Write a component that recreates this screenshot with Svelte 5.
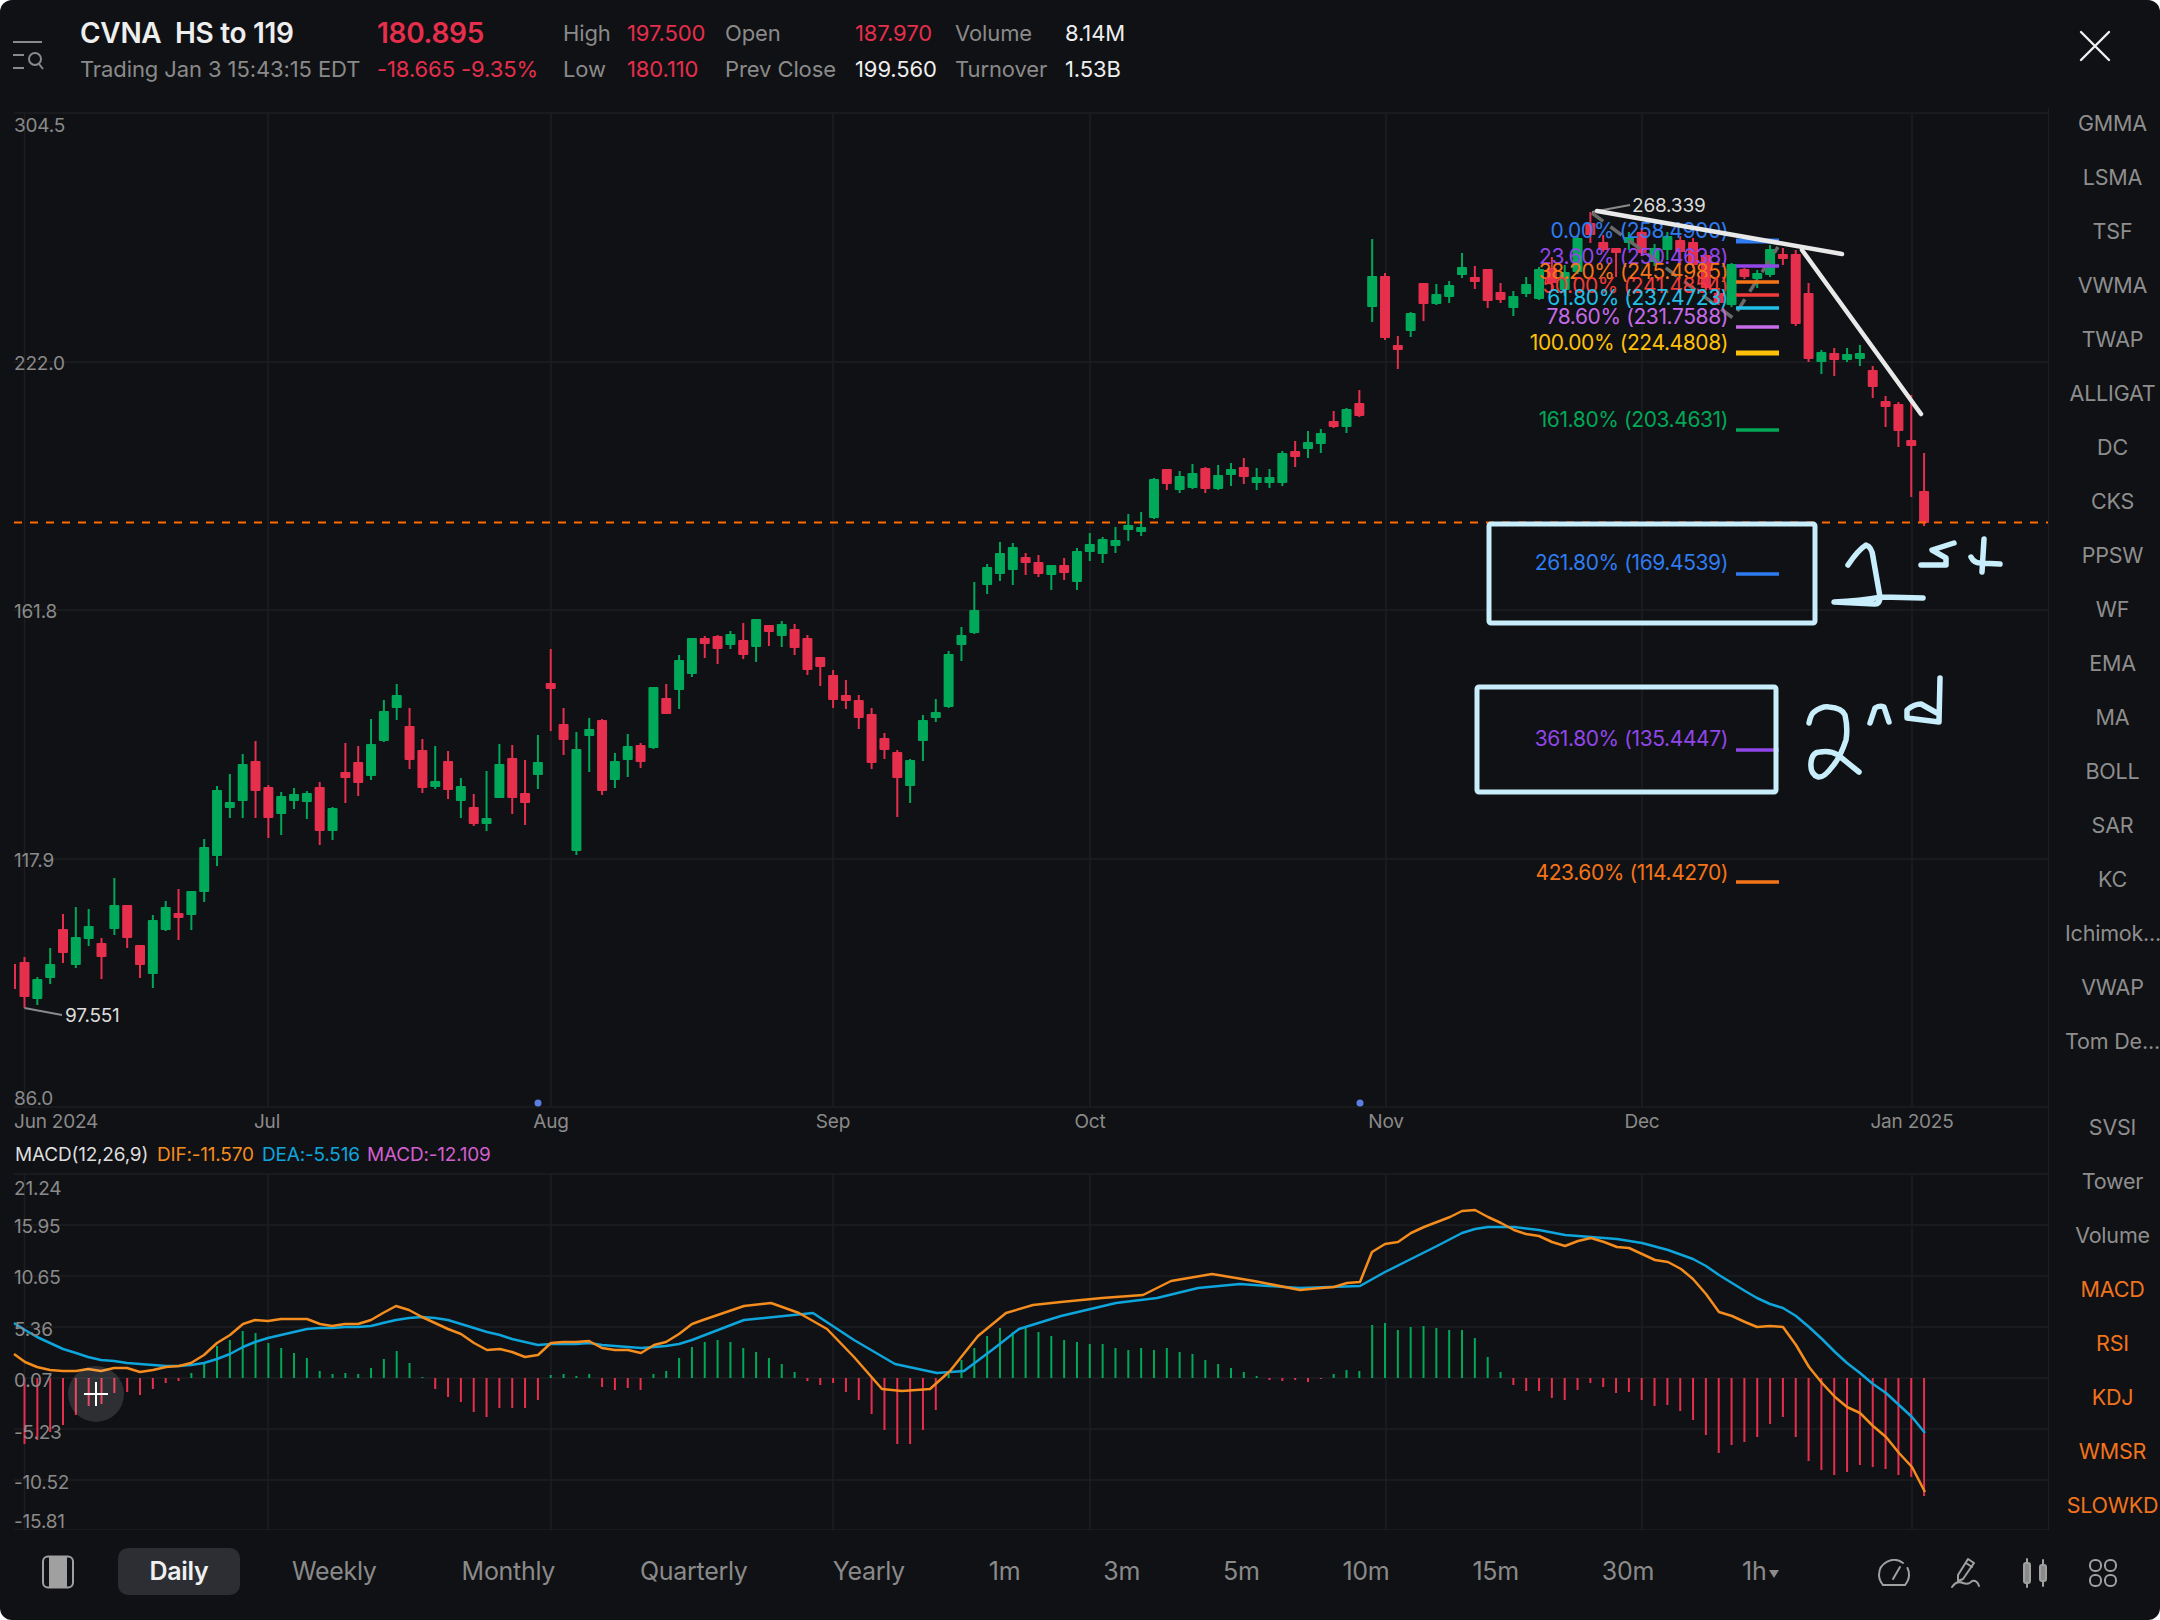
<script>
  const sideTop = ["GMMA", "LSMA", "TSF", "VWMA", "TWAP", "ALLIGAT", "DC", "CKS", "PPSW", "WF", "EMA", "MA", "BOLL", "SAR", "KC", "Ichimok...", "VWAP", "Tom De..."];
  const sideBottom = [
    { name: "SVSI" }, { name: "Tower" }, { name: "Volume" },
    { name: "MACD", on: true }, { name: "RSI", on: true }, { name: "KDJ", on: true }, { name: "WMSR", on: true }, { name: "SLOWKD", on: true }
  ];
  const tabs = ["Daily", "Weekly", "Monthly", "Quarterly", "Yearly", "1m", "3m", "5m", "10m", "15m", "30m", "1h"];

  const red = "#e62e4d";
  const green = "#00a85a";
  const step = 12.835;
  const x0 = 24.5;

  // up, high, body top, body bottom, low (page pixels)
  const candles = [
    [0,957,962,997,1008],[1,977,979,999,1005],[1,948,964,978,984],[0,914,929,953,963],[1,907,937,965,968],
    [1,909,926,939,946],[0,938,943,957,979],[1,878,905,929,935],[0,905,905,938,948],[0,945,945,965,978],
    [1,915,920,974,988],[1,901,907,930,931],[0,889,913,918,940],[1,891,891,915,930],[1,839,847,892,902],
    [1,786,790,856,866],[1,774,802,808,818],[1,754,764,801,818],[0,741,761,791,818],[0,785,787,818,838],
    [1,792,796,814,835],[1,788,794,801,809],[1,791,793,802,819],[0,782,787,831,845],[1,807,808,831,840],
    [0,743,772,778,803],[0,746,762,783,796],[1,719,744,776,780],[1,700,711,741,742],[1,684,695,708,720],
    [0,708,726,760,769],[0,739,750,788,793],[1,746,781,787,789],[0,751,761,790,799],[1,778,786,801,818],
    [0,794,807,824,826],[1,771,818,824,831],[1,744,764,798,798],[0,745,758,798,814],[0,760,793,803,825],
    [1,735,762,775,789],[0,649,683,689,731],[0,708,724,740,755],[1,732,749,851,855],[1,718,729,736,772],
    [0,719,720,791,795],[1,753,761,780,788],[1,734,746,760,777],[0,743,745,762,768],[1,687,687,748,749],
    [0,684,698,714,714],[1,655,660,690,709],[1,638,638,674,677],[0,636,638,644,658],[0,635,636,649,664],
    [1,631,634,645,649],[0,623,640,655,659],[1,619,619,647,662],[0,625,625,632,646],[1,621,624,636,647],
    [0,624,629,648,655],[0,635,638,670,675],[0,657,657,667,686],[0,670,675,700,708],[0,680,695,701,709],
    [0,695,700,718,729],[0,708,714,763,769],[0,733,738,750,759],[0,750,752,778,817],[1,759,760,786,803],
    [1,715,720,741,761],[1,699,712,718,722],[1,651,654,707,708],[1,627,635,645,661],[1,582,610,633,634],
    [1,564,567,585,594],[1,542,553,574,581],[1,543,547,570,585],[0,553,557,563,575],[0,555,562,574,577],
    [1,565,565,575,590],[0,558,565,573,580],[1,548,551,582,590],[1,533,544,552,561],[1,537,539,554,563],
    [1,527,540,546,553],[1,514,525,530,541],[1,512,527,532,536],[1,478,479,518,519],[0,469,469,484,490],
    [1,471,476,490,493],[1,464,473,488,489],[0,467,468,489,493],[1,465,475,489,490],[1,463,469,475,486],
    [0,458,467,477,484],[1,468,477,483,490],[1,469,477,483,488],[1,451,453,483,486],[0,441,451,457,467],
    [1,431,442,449,458],[1,429,433,444,453],[0,411,421,427,428],[1,408,409,427,433],[0,390,403,416,417],
    [1,239,276,307,322],[0,273,276,338,340],[0,336,345,350,369],[1,312,313,331,337],[0,283,283,304,321],
    [1,284,294,304,305],[1,281,285,297,303],[1,253,267,275,278],[0,266,277,282,289],[0,269,269,301,308],
    [0,283,292,300,303],[1,291,296,308,316],[1,277,284,294,297],[1,267,269,299,300],[0,257,268,283,290],
    [1,265,272,290,296],[1,236,238,272,274],[0,212,223,235,243],[0,235,242,250,252],[0,248,248,253,277],
    [1,232,237,243,250],[0,228,232,253,256],[1,244,248,262,266],[1,232,236,250,260],[0,236,240,252,265],
    [0,238,242,265,268],[0,252,255,288,290],[0,290,293,303,305],[1,263,264,305,307],[0,268,269,277,279],
    [1,270,273,279,288],[1,245,249,275,277],[0,248,254,259,265],[0,250,254,324,326],[0,283,293,359,362],
    [1,350,352,362,374],[0,348,353,360,376],[1,348,354,360,362],[1,345,353,359,366],[0,366,370,387,398],
    [0,396,401,407,427],[0,402,404,431,447],[0,395,440,446,497],[0,453,491,523,526]
  ];

  // offset from the zero line, down is positive
  const hist = [
    66,62,54,47,37,28,26,15,14,17,11,5,3,-5,-15,-32,-38,-47,-45,-35,
    -30,-25,-20,-7,-4,-5,-4,-10,-19,-27,-15,-1,11,19,24,34,39,30,30,30,
    22,-3,-4,-2,-4,9,12,10,12,-4,-7,-20,-31,-36,-38,-36,-30,-26,-20,-14,
    -6,3,7,5,14,22,36,52,66,66,52,32,-4,-18,-30,-42,-50,-46,-50,-46,
    -42,-38,-36,-34,-34,-30,-28,-30,-28,-30,-26,-24,-18,-14,-10,-6,-2,2,3,2,
    4,1,-4,-8,-7,-53,-55,-48,-51,-52,-50,-48,-48,-40,-21,-6,7,13,13,20,
    22,12,5,9,15,14,22,28,27,33,42,57,75,67,64,59,46,39,59,83,
    92,97,94,87,89,91,97,99,118
  ];

  const dif = "14,1354 25,1362 37,1367 50,1370 63,1371 76,1371 88,1369 101,1371 114,1368 127,1368 140,1372 153,1370 166,1367 179,1366 191,1363 204,1355 217,1343 230,1335 243,1324 255,1320 268,1321 281,1319 294,1319 307,1319 320,1324 332,1326 345,1324 358,1324 371,1320 383,1313 396,1306 409,1310 422,1317 435,1323 448,1329 461,1334 474,1343 487,1350 500,1349 512,1352 525,1357 538,1355 551,1343 563,1342 576,1342 589,1341 602,1348 615,1350 628,1350 641,1353 654,1345 666,1342 679,1334 692,1324 703,1320 744,1306 771,1303 799,1313 827,1329 854,1357 882,1389 902,1391 930,1389 950,1371 978,1336 1006,1313 1033,1305 1061,1302 1102,1298 1143,1295 1171,1281 1212,1274 1254,1281 1300,1290 1321,1288 1334,1287 1347,1283 1360,1282 1372,1252 1385,1244 1398,1242 1411,1233 1424,1227 1437,1222 1450,1217 1462,1211 1475,1210 1488,1217 1501,1223 1514,1230 1526,1234 1539,1236 1552,1242 1565,1246 1578,1241 1591,1238 1604,1242 1617,1247 1629,1248 1642,1254 1655,1260 1668,1262 1681,1269 1693,1279 1706,1294 1719,1312 1732,1316 1745,1322 1757,1327 1770,1326 1783,1327 1796,1345 1809,1367 1822,1383 1835,1397 1847,1407 1860,1413 1873,1426 1886,1437 1899,1453 1912,1467 1925,1492";
  const dea = "14,1323 25,1330 37,1337 50,1343 63,1349 76,1353 88,1357 101,1360 114,1361 127,1363 140,1364 153,1365 166,1366 179,1366 191,1365 204,1363 217,1359 230,1354 243,1347 255,1342 268,1338 281,1335 294,1332 307,1329 320,1328 332,1328 345,1327 358,1327 371,1326 383,1323 396,1320 409,1318 422,1317 435,1318 448,1320 461,1324 474,1328 487,1332 500,1335 512,1339 525,1342 538,1345 551,1344 563,1344 576,1344 589,1343 602,1345 615,1346 628,1347 641,1348 654,1347 666,1346 679,1344 692,1340 744,1320 813,1313 854,1340 895,1364 937,1373 964,1371 992,1350 1019,1329 1061,1316 1116,1303 1157,1298 1198,1288 1240,1284 1300,1288 1360,1286 1385,1272 1411,1259 1437,1246 1462,1233 1475,1229 1488,1227 1501,1227 1514,1227 1539,1230 1565,1235 1591,1237 1617,1239 1642,1243 1668,1250 1693,1259 1706,1266 1719,1275 1732,1283 1745,1291 1757,1298 1770,1304 1783,1308 1796,1316 1809,1327 1822,1339 1835,1352 1847,1363 1860,1373 1873,1384 1886,1393 1899,1405 1912,1417 1925,1433";

  const fib = [
    { t: "0.00% (258.4900)", ty: 230, ly: 241, c: "#2f7bf0", h: 5 },
    { t: "23.60% (250.4638)", ty: 256, ly: 266, c: "#9046e8", h: 3.5 },
    { t: "38.20% (245.4985)", ty: 271, ly: 282, c: "#f57418", h: 3.5 },
    { t: "50.00% (241.4854)", ty: 285, ly: 295, c: "#f03b3b", h: 3.5 },
    { t: "61.80% (237.4723)", ty: 297, ly: 308, c: "#1fc0e8", h: 3.5 },
    { t: "78.60% (231.7588)", ty: 316, ly: 327, c: "#c56be8", h: 3.5 },
    { t: "100.00% (224.4808)", ty: 342, ly: 353, c: "#ffc107", h: 5 },
    { t: "161.80% (203.4631)", ty: 419, ly: 430, c: "#00a857", h: 3.5 },
    { t: "261.80% (169.4539)", ty: 562, ly: 574, c: "#2f7bf0", h: 3.5 },
    { t: "361.80% (135.4447)", ty: 738, ly: 750, c: "#9046e8", h: 3.5 },
    { t: "423.60% (114.4270)", ty: 872, ly: 882, c: "#f57418", h: 3.5 }
  ];

  const vgrid = [24.5, 268, 551, 833, 1090, 1386, 1642, 1912];
  const priceGrid = [113, 362, 610, 859, 1107];
  const macdGrid = [1174, 1225, 1276, 1327, 1378, 1429, 1480, 1530];
  const priceLabels = [["304.5", 125], ["222.0", 363], ["161.8", 611], ["117.9", 860], ["86.0", 1098]];
  const macdLabels = [["21.24", 1188], ["15.95", 1226], ["10.65", 1277], ["5.36", 1329], ["0.07", 1380], ["-5.23", 1432], ["-10.52", 1482], ["-15.81", 1521]];
  const dates = [["Jul", 267], ["Aug", 551], ["Sep", 833], ["Oct", 1090], ["Nov", 1386], ["Dec", 1642], ["Jan 2025", 1912]];
</script>

<div class="screen">
  <header>
    <svg class="menu" width="32" height="32" viewBox="0 0 32 32" fill="none" stroke="#8a8a8a" stroke-width="2">
      <path d="M0 2h29M0 15h11M0 28h11" />
      <circle cx="22" cy="19" r="6" />
      <path d="M26 24l4 5" />
    </svg>
    <div class="quote">
      <div class="name">CVNA&nbsp; HS to 119</div>
      <div class="sub">Trading Jan 3 15:43:15 EDT</div>
    </div>
    <div class="quote last">
      <div class="price">180.895</div>
      <div class="sub neg">-18.665 -9.35%</div>
    </div>
    <div class="stats">
      <span>High</span><span class="neg">197.500</span><span>Open</span><span class="neg">187.970</span><span>Volume</span><span class="white">8.14M</span>
      <span>Low</span><span class="neg">180.110</span><span>Prev Close</span><span class="white">199.560</span><span>Turnover</span><span class="white">1.53B</span>
    </div>
    <svg class="close" width="32" height="32" viewBox="0 0 32 32" stroke="#f0f0f0" stroke-width="2.4" stroke-linecap="round">
      <path d="M2 2l28 28M30 2L2 30" />
    </svg>
  </header>

  <main>
    <svg class="chart" width="2048" height="1422" viewBox="0 108 2048 1422">
      {#each priceGrid as y}
        <line x1="14" x2="2048" y1={y} y2={y} class="grid" />
      {/each}
      {#each macdGrid as y}
        <line x1="14" x2="2048" y1={y} y2={y} class="grid" />
      {/each}
      {#each vgrid as x}
        <line x1={x} x2={x} y1="113" y2="1107" class="grid" />
        <line x1={x} x2={x} y1="1174" y2="1530" class="grid" />
      {/each}

      {#each priceLabels as [t, y]}
        <text x="14" {y} class="axis">{t}</text>
      {/each}
      <text x="14" y="1121" class="axis">Jun 2024</text>
      {#each dates as [t, x]}
        <text {x} y="1121" class="axis" text-anchor="middle">{t}</text>
      {/each}

      <rect x="14" y="964" width="2" height="25" fill={red} />
      {#each candles as [up, hi, top, bot, lo], i}
        {@const x = x0 + i * step}
        <rect x={x - 1} y={hi} width="2" height={lo - hi} fill={up ? green : red} />
        <rect x={x - 5} y={top} width="10" height={Math.max(bot - top, 2)} rx="1" fill={up ? green : red} />
      {/each}

      <line x1="14" x2="2048" y1="522.5" y2="522.5" class="last-line" />

      <circle cx="538" cy="1103" r="3.5" fill="#5b7fe0" />
      <circle cx="1360" cy="1103" r="3.5" fill="#5b7fe0" />

      <polyline points="24.5,1008 62,1015" class="lead" />
      <text x="65" y="1015" class="mark">97.551</text>

      <polyline points="1592,213 1733,318 1778,247" class="trace" />
      <polyline points="1592,212 1630,205" class="lead" />
      <text x="1632" y="205" class="mark">268.339</text>

      {#each fib as f}
        <text x="1728" y={f.ty} class="fib" fill={f.c}>{f.t}</text>
        <rect x="1736" y={f.ly - f.h / 2} width="43" height={f.h} fill={f.c} />
      {/each}

      <line x1="1597" y1="211" x2="1842" y2="254" class="pen white-pen" />
      <line x1="1802" y1="250" x2="1921" y2="414" class="pen white-pen" />
      <rect x="1489" y="524" width="326" height="99" rx="2" class="pen blue-pen" />
      <rect x="1477" y="687" width="299" height="105" rx="2" class="pen blue-pen" />
      <!-- handwritten 1st / 2nd -->
      <path d="M1848 565Q1858 550 1866 545Q1872 547 1873 557L1880 597Q1880 604 1875 604L1834 602Q1860 601 1882 597L1923 598" class="pen blue-ink" />
      <path d="M1954 543L1932 550L1946 558L1946 565L1921 565" class="pen blue-ink" />
      <path d="M1984 539L1982 572M1971 557Q1974 563 1980 563L2000 564" class="pen blue-ink" />
      <path d="M1809 723Q1811 714 1814 712Q1822 706 1829 707Q1842 708 1845 715Q1848 728 1846 740Q1840 758 1832 767Q1824 778 1818 777Q1810 774 1811 763Q1812 752 1820 752Q1830 750 1838 755L1859 772" class="pen blue-ink" />
      <path d="M1870 723L1875 708Q1880 705 1884 707L1889 722" class="pen blue-ink" />
      <path d="M1940 678L1939 722L1907 718L1907 710Q1914 704 1921 704L1937 713" class="pen blue-ink" />

      <text x="15" y="1154" class="legend" fill="#ddd">MACD(12,26,9)</text>
      <text x="157" y="1154" class="legend" fill="#f48c1e">DIF:-11.570</text>
      <text x="262" y="1154" class="legend" fill="#0ea5dd">DEA:-5.516</text>
      <text x="367" y="1154" class="legend" fill="#d05fd0">MACD:-12.109</text>

      {#each hist as v, i}
        <rect x={x0 + i * step - 1} y={v < 0 ? 1378 + v : 1378} width="2" height={Math.abs(v)} fill={v < 0 ? green : red} />
      {/each}
      <polyline points={dea} class="macd-line" stroke="#0ea5dd" />
      <polyline points={dif} class="macd-line" stroke="#f48c1e" />

      {#each macdLabels as [t, y]}
        <text x="14" {y} class="axis">{t}</text>
      {/each}

      <circle cx="96" cy="1394" r="28" fill="#fff" fill-opacity="0.13" />
      <path d="M84 1394h24M96 1382v24" stroke="#fff" stroke-width="2" />
    </svg>

    <aside>
      <div class="group">
        {#each sideTop as s}
          <div class="side-item">{s}</div>
        {/each}
      </div>
      <div class="group">
        {#each sideBottom as s}
          <div class="side-item" class:on={s.on}>{s.name}</div>
        {/each}
      </div>
    </aside>
  </main>

  <footer>
    <svg class="split" width="32" height="34" viewBox="0 0 32 34">
      <rect x="7" y="2" width="18" height="30" fill="#a0a0a0" />
      <rect x="1" y="1.500" width="30" height="31" rx="5" fill="none" stroke="#a0a0a0" stroke-width="2" />
    </svg>
    <nav>
      {#each tabs as t, i}
        <div class="tab" class:active={i === 0} class:short={i > 4} class:last={t === "1h"}>
          {t}{#if t === "1h"}<span class="caret"></span>{/if}
        </div>
      {/each}
    </nav>
    <div class="tools">
      <svg width="32" height="28" viewBox="0 0 32 28" fill="none" stroke="#a0a0a0" stroke-width="2" stroke-linecap="round">
        <path d="M5 26Q1 21 1 16A15 15 0 0 1 25 4M29.500 9Q31 12 31 16Q31 21 27 26" />
        <path d="M5 26H27M15 20L22 8" />
      </svg>
      <svg width="30" height="30" viewBox="0 0 30 30" fill="none" stroke="#a0a0a0" stroke-width="2" stroke-linecap="round" stroke-linejoin="round">
        <path d="M17 1l6 4-11 16-5 2 0-6zM15 5l6 4" />
        <path d="M1 29Q6 22 12 25Q18 27 21 23Q26 22 28 28" />
      </svg>
      <svg width="26" height="30" viewBox="0 0 26 30" fill="#8a8a8a" stroke="#a0a0a0" stroke-width="2" stroke-linecap="round">
        <rect x="2" y="5" width="6" height="20" rx="2" />
        <rect x="18" y="7" width="6" height="16" rx="2" />
        <path d="M5 1v4M5 25v4M21 2v5M21 23v5" />
      </svg>
      <svg width="28" height="28" viewBox="0 0 28 28" fill="none" stroke="#a0a0a0" stroke-width="2">
        <rect x="1" y="1" width="11" height="11" rx="5" />
        <rect x="16" y="1" width="11" height="11" rx="5" />
        <rect x="1" y="16" width="11" height="11" rx="5" />
        <rect x="16" y="16" width="11" height="11" rx="5" />
      </svg>
    </div>
  </footer>
</div>

<style>
  :global(body) {
    background: #fff;
  }

  .screen {
    width: 2160px;
    height: 1620px;
    display: flex;
    flex-direction: column;
    overflow: hidden;
    border-radius: 12px;
    background: #101114;
    font-family: Inter, "Liberation Sans", sans-serif;
    color: #8a8a8a;
  }

  header {
    height: 108px;
    flex: none;
    display: flex;
    align-items: flex-start;
    box-sizing: border-box;
    padding: 14px 49px 0 13px;
  }

  .menu {
    margin: 26px 35px 0 0;
    flex: none;
  }

  .quote {
    display: flex;
    flex-direction: column;
    gap: 3px;
    width: 297px;
  }

  .quote.last {
    width: 186px;
  }

  .name,
  .price {
    font-size: 28px;
    line-height: 38px;
    font-weight: 600;
    letter-spacing: -0.3px;
    color: #eee;
  }

  .price {
    color: #e62e4d;
  }

  .sub {
    font-size: 22px;
    line-height: 28px;
    letter-spacing: -0.1px;
    white-space: nowrap;
  }

  .stats {
    display: grid;
    grid-template-columns: 64px 98px 130px 100px 110px auto;
    row-gap: 8px;
    font-size: 22px;
    line-height: 28px;
    letter-spacing: -0.1px;
    padding-top: 5px;
    white-space: nowrap;
  }

  .neg {
    color: #e62e4d;
  }

  .white {
    color: #eee;
  }

  .close {
    margin: 16px 0 0 auto;
  }

  main {
    flex: 1;
    display: flex;
    min-height: 0;
  }

  .chart {
    flex: none;
    display: block;
  }

  .grid {
    stroke: #1c1e21;
    stroke-width: 1.500;
  }

  .axis {
    font-size: 19px;
    letter-spacing: -0.2px;
    fill: #8a8a8a;
    dominant-baseline: central;
  }

  .legend {
    font-size: 19px;
    letter-spacing: -0.2px;
    dominant-baseline: central;
  }

  .mark {
    font-size: 19px;
    letter-spacing: -0.2px;
    fill: #ddd;
    dominant-baseline: central;
  }

  .lead {
    fill: none;
    stroke: #8a8a8a;
    stroke-width: 2;
  }

  .trace {
    fill: none;
    stroke: #6a6a6a;
    stroke-width: 3.500;
    stroke-dasharray: 14 9;
  }

  .fib {
    font-size: 21px;
    letter-spacing: -0.4px;
    text-anchor: end;
    dominant-baseline: central;
  }

  .last-line {
    stroke: #ff6a00;
    stroke-width: 2;
    stroke-dasharray: 8 8;
  }

  .pen {
    fill: none;
    stroke-linecap: round;
    stroke-linejoin: round;
  }

  .white-pen {
    stroke: #e9e9e9;
    stroke-width: 4.500;
  }

  .blue-pen {
    stroke: #c9eefb;
    stroke-width: 5;
  }

  .blue-ink {
    stroke: #c9eefb;
    stroke-width: 5.500;
  }

  .macd-line {
    fill: none;
    stroke-width: 2.500;
    stroke-linejoin: round;
  }

  aside {
    flex: none;
    width: 112px;
    box-sizing: border-box;
    padding-left: 16px;
    border-left: 1.500px solid #1c1e21;
    display: flex;
    flex-direction: column;
    gap: 32px;
  }

  .side-item {
    height: 54px;
    line-height: 30px;
    font-size: 21.500px;
    letter-spacing: -0.2px;
    text-align: center;
    white-space: nowrap;
    color: #8e8e8e;
  }

  .side-item.on {
    color: #f0731e;
  }

  footer {
    flex: none;
    height: 90px;
    display: flex;
    align-items: flex-start;
    box-sizing: border-box;
    padding: 18px 0 0 42px;
  }

  .split {
    flex: none;
    margin: 7px 44px 0 0;
  }

  nav {
    display: flex;
    gap: 25px;
  }

  .tab {
    height: 47px;
    padding: 0 30px;
    line-height: 47px;
    font-size: 25px;
    letter-spacing: -0.3px;
    border-radius: 10px;
    white-space: nowrap;
  }

  .tab.active {
    padding: 0 31.500px;
    margin-right: -3px;
    background: #2c2e33;
    color: #f0f0f0;
    font-weight: 600;
  }

  .tab.short {
    padding: 0 29px;
  }

  .tab.last {
    margin-left: 5px;
  }

  .caret {
    display: inline-block;
    margin-left: 3px;
    vertical-align: 2px;
    border-left: 5px solid transparent;
    border-right: 5px solid transparent;
    border-top: 8px solid #8a8a8a;
  }

  .tools {
    margin-left: auto;
    display: flex;
    align-items: center;
    gap: 41px;
    padding: 10px 43px 0 0;
  }
</style>
